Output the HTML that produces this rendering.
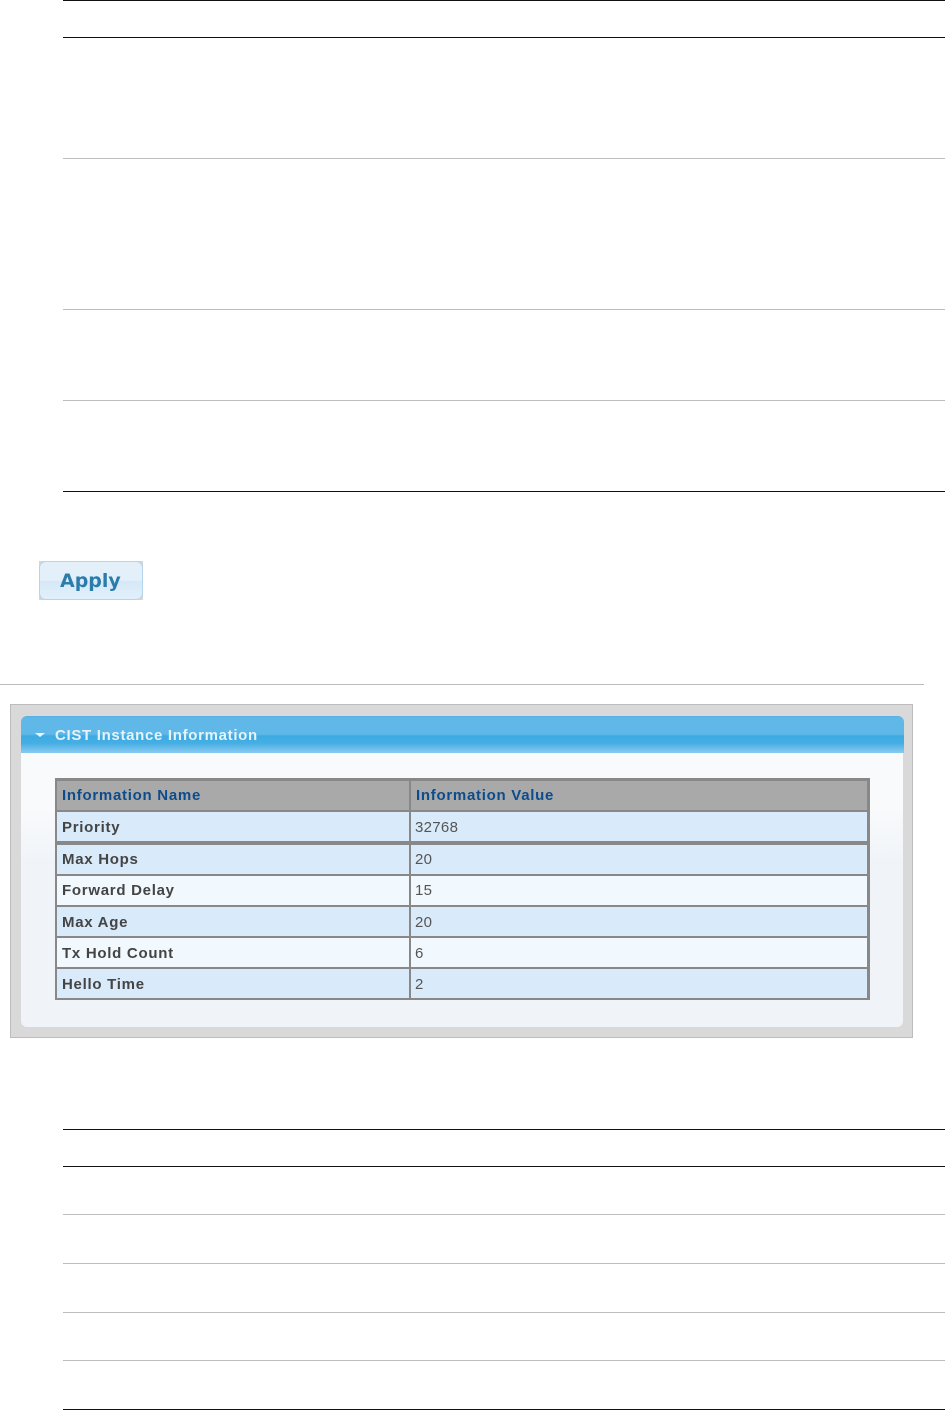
<!DOCTYPE html>
<html><head><meta charset="utf-8">
<style>
html,body{margin:0;padding:0;background:#fff;}
body{position:relative;width:945px;height:1410px;overflow:hidden;font-family:"Liberation Sans",sans-serif;}
.a{position:absolute;}
.k{left:63px;width:882px;height:1px;background:#111;position:absolute;}
.g{left:63px;width:882px;height:1px;background:#bdbdbd;position:absolute;}
.r{position:absolute;left:57px;width:810px;}
.n{position:absolute;left:62px;font:bold 15px/18px "Liberation Sans",sans-serif;letter-spacing:.72px;color:#444;white-space:nowrap;filter:blur(.3px);}
.v{position:absolute;left:415px;font:15px/18px "Liberation Sans",sans-serif;letter-spacing:.3px;color:#555;white-space:nowrap;filter:blur(.3px);}
.h{color:#0d4c8c;}
</style></head><body>
<div class="k" style="top:0"></div>
<div class="k" style="top:37px"></div>
<div class="g" style="top:158px"></div>
<div class="g" style="top:309px"></div>
<div class="g" style="top:400px"></div>
<div class="k" style="top:491px"></div>

<div class="a" style="left:39px;top:561px;width:104px;height:39px;background:#d6d6d6;"></div>
<div class="a" style="left:39px;top:561px;width:102px;height:37px;border:1px solid #b4d5ee;border-radius:7px;background:linear-gradient(#e3f0fa 0,#e3f0fa 50%,#d5e8f7 52%,#e2f0fb 100%);"></div>
<div class="a" style="left:60px;top:568px;font:bold 19px/26px 'DejaVu Sans',sans-serif;color:#2a7cab;filter:blur(.3px);">Apply</div>

<div class="a" style="left:0;top:684px;width:924px;height:1px;background:#bbb;"></div>

<div class="a" style="left:10px;top:704px;width:901px;height:332px;background:#d9d9d9;border:1px solid #bcbcbc;"></div>
<div class="a" style="left:21px;top:752px;width:882px;height:275px;background:linear-gradient(#f9fafc 0,#f9fafc 20%,#f0f4f8 40%,#f0f4f8 100%);border-radius:0 0 6px 6px;"></div>
<div class="a" style="left:21px;top:716px;width:883px;height:37px;border-radius:6px 6px 0 0;background:linear-gradient(#5aaee3 0,#60b8e8 2px,#60b8e8 18px,#3caae2 20px,#45aee4 27px,#84c8ef 36px);"></div>
<div class="a" style="left:35px;top:733px;width:0;height:0;border-left:5px solid transparent;border-right:5px solid transparent;border-top:4px solid #eaf5fc;"></div>
<div class="a" style="left:55px;top:727px;font:bold 15px/18px 'Liberation Sans',sans-serif;letter-spacing:.68px;color:#e6f3fb;white-space:nowrap;filter:blur(.3px);">CIST Instance Information</div>

<div class="a" style="left:55px;top:778px;width:815px;height:222px;background:#888;"></div>
<div class="r" style="top:781px;height:29px;background:#a9a9a9;"></div>
<div class="r" style="top:812px;height:29px;background:#d9eafa;"></div>
<div class="r" style="top:845px;height:29px;background:#d9eafa;"></div>
<div class="r" style="top:876px;height:29px;background:#f1f8fe;"></div>
<div class="r" style="top:907px;height:29px;background:#d9eafa;"></div>
<div class="r" style="top:938px;height:29px;background:#f1f8fe;"></div>
<div class="r" style="top:969px;height:29px;background:#d9eafa;"></div>
<div class="a" style="left:409px;top:778px;width:2px;height:222px;background:#888;"></div>

<div class="n h" style="top:787px;">Information Name</div>
<div class="n h" style="top:787px;left:416px;">Information Value</div>
<div class="n" style="top:819px;">Priority</div><div class="v" style="top:819px;">32768</div>
<div class="n" style="top:851px;">Max Hops</div><div class="v" style="top:851px;">20</div>
<div class="n" style="top:882px;">Forward Delay</div><div class="v" style="top:882px;">15</div>
<div class="n" style="top:914px;">Max Age</div><div class="v" style="top:914px;">20</div>
<div class="n" style="top:945px;">Tx Hold Count</div><div class="v" style="top:945px;">6</div>
<div class="n" style="top:976px;">Hello Time</div><div class="v" style="top:976px;">2</div>

<div class="k" style="top:1129px"></div>
<div class="k" style="top:1166px"></div>
<div class="g" style="top:1214px"></div>
<div class="g" style="top:1263px"></div>
<div class="g" style="top:1312px"></div>
<div class="g" style="top:1360px"></div>
<div class="k" style="top:1409px"></div>
</body></html>
